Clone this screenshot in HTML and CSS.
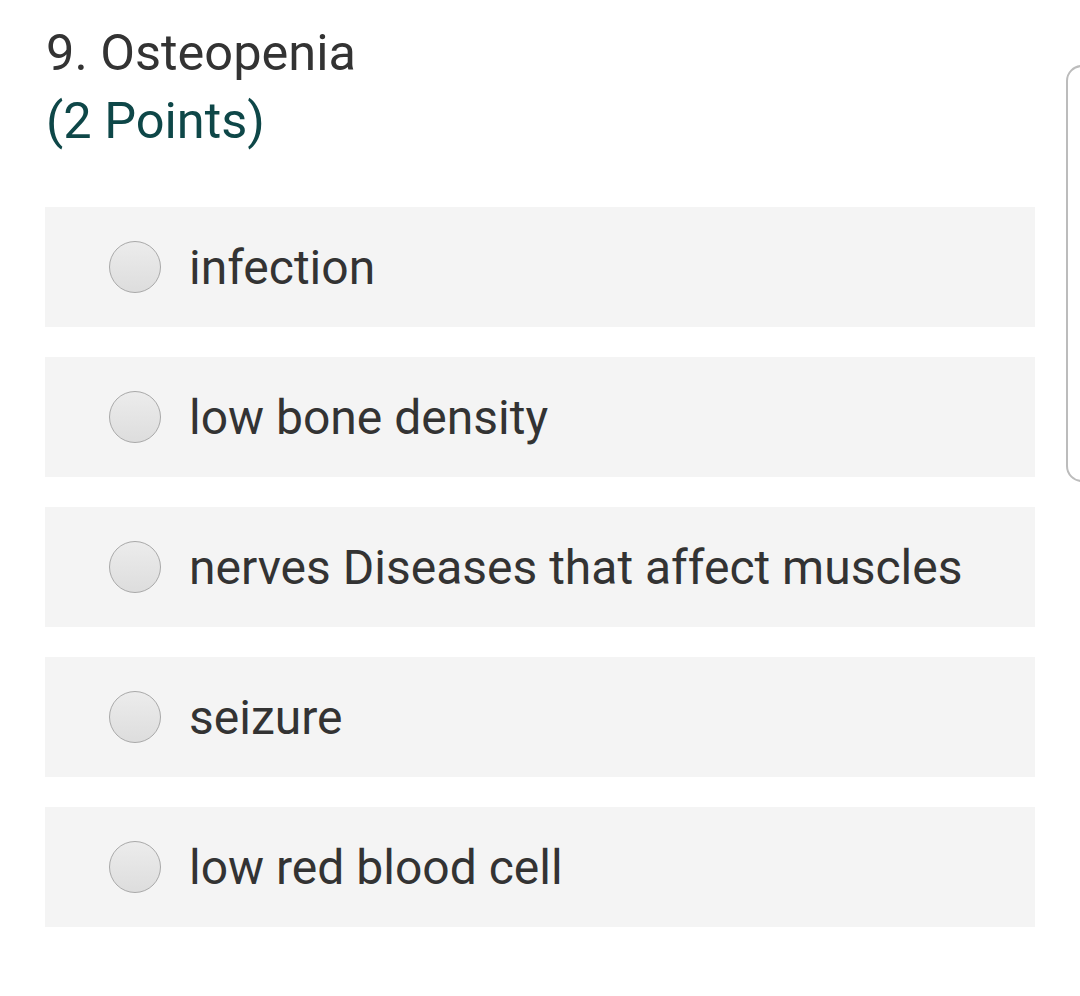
FILE: index.html
```html
<!DOCTYPE html>
<html>
<head>
<meta charset="utf-8">
<link rel="stylesheet" href="styles.css">
</head>
<body>
<div class="page">
  <div class="question">
    <div class="title">9. Osteopenia</div>
    <div class="points">(2 Points)</div>
  </div>
  <div class="options">
    <div class="option"><span class="radio"></span><span class="label">infection</span></div>
    <div class="option"><span class="radio"></span><span class="label">low bone density</span></div>
    <div class="option"><span class="radio"></span><span class="label">nerves Diseases that affect muscles</span></div>
    <div class="option"><span class="radio"></span><span class="label">seizure</span></div>
    <div class="option"><span class="radio"></span><span class="label">low red blood cell</span></div>
  </div>
  <div class="side-frame"></div>
</div>
</body>
</html>
```
FILE: styles.css
```css
html, body {
  margin: 0;
  padding: 0;
  background: #ffffff;
}
.page {
  position: relative;
  width: 1080px;
  height: 996px;
  overflow: hidden;
  font-family: Roboto, "Noto Sans", sans-serif;
  padding: 19px 45px 0 45px;
  box-sizing: border-box;
}
.question {
  padding-left: 1px;
}
.title {
  font-size: 50.5px;
  line-height: 68px;
  color: #333333;
}
.points {
  font-size: 50.5px;
  line-height: 68px;
  color: #0e4748;
}
.options {
  margin-top: 52px;
  width: 990px;
  display: flex;
  flex-direction: column;
  gap: 30px;
}
.option {
  height: 120px;
  background: #f4f4f4;
  display: flex;
  align-items: center;
  padding-left: 64px;
  box-sizing: border-box;
}
.radio {
  width: 50px;
  height: 50px;
  border-radius: 50%;
  border: 1px solid #a9a9a9;
  background: linear-gradient(#ececec, #dddddd);
  flex: none;
}
.label {
  margin-left: 28px;
  font-size: 48px;
  color: #333333;
}
.side-frame {
  position: absolute;
  left: 1066px;
  top: 65px;
  width: 60px;
  height: 413px;
  border: 2px solid #bcbcbc;
  border-radius: 16px;
}
```
